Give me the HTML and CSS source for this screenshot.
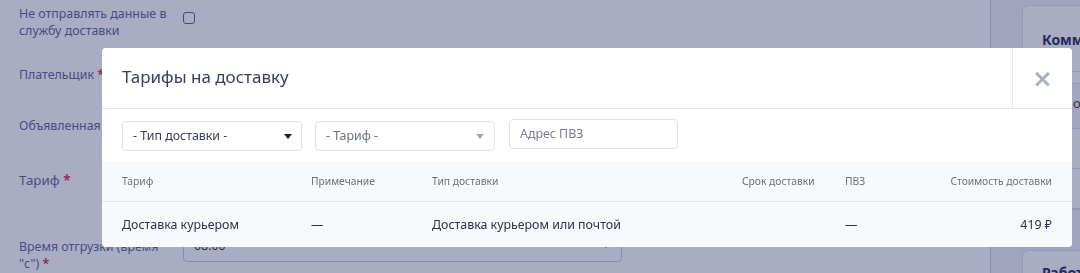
FILE: index.html
```html
<!DOCTYPE html>
<html lang="ru">
<head>
<meta charset="utf-8">
<title>Тарифы на доставку</title>
<link rel="stylesheet" href="styles.css">
</head>
<body>
<div class="page">
  <div class="form">
    <div class="row row-1">
      <div class="label">Не отправлять данные в<br>службу доставки</div>
      <div class="control"><span class="checkbox"></span></div>
    </div>
    <div class="row row-2">
      <div class="label">Плательщик <span class="req">*</span></div>
    </div>
    <div class="row row-3">
      <div class="label">Объявленная</div>
    </div>
    <div class="row row-4">
      <div class="label">Тариф <span class="req">*</span></div>
    </div>
    <div class="row row-5">
      <div class="label">Время отгрузки (время<br>"с") <span class="req">*</span></div>
      <div class="control"><div class="bg-select">08:00<span class="bg-caret"></span></div></div>
    </div>
  </div>
  <div class="side">
    <div class="card">
      <div class="card-title">Комментарии</div>
      <div class="card-line"></div>
      <div class="card-row shaded">о</div>
      <div class="card-row"></div>
      <div class="card-row"></div>
      <div class="card-row"></div>
    </div>
    <div class="card card-2">
      <div class="card-title">Работы</div>
    </div>
  </div>
</div>

<div class="overlay"></div>

<div class="modal">
  <div class="modal-head">
    <div class="modal-title">Тарифы на доставку</div>
    <div class="modal-close">×</div>
  </div>
  <div class="filters">
    <div class="select select-dark">- Тип доставки -<span class="caret"></span></div>
    <div class="select select-muted">- Тариф -<span class="caret caret-light"></span></div>
    <div class="input">Адрес ПВЗ</div>
  </div>
  <div class="table">
    <div class="tr th">
      <div>Тариф</div>
      <div>Примечание</div>
      <div>Тип доставки</div>
      <div>Срок доставки</div>
      <div>ПВЗ</div>
      <div class="right">Стоимость доставки</div>
    </div>
    <div class="tr td">
      <div>Доставка курьером</div>
      <div>—</div>
      <div>Доставка курьером или почтой</div>
      <div></div>
      <div>—</div>
      <div class="right">419 ₽</div>
    </div>
  </div>
</div>
</body>
</html>
```

FILE: styles.css
```css
* { box-sizing: border-box; }
html, body {
  margin: 0;
  padding: 0;
  width: 1080px;
  height: 273px;
  overflow: hidden;
  font-family: "Noto Sans", "Open Sans", sans-serif;
  background: #ffffff;
}

.page {
  display: flex;
  height: 273px;
  overflow: hidden;
}

.form {
  flex: none;
  width: 990px;
  padding-left: 19px;
  display: flex;
  flex-direction: column;
  color: #5d6290;
  font-size: 12.4px;
  line-height: 17px;
}
.row { display: flex; }
.label { width: 164px; }
.req { color: #e0305a; font-weight: 700; }
.row-1 { padding-top: 5px; }
.row-1 .control { padding-top: 7px; }
.checkbox {
  display: block;
  width: 12px;
  height: 12px;
  border: 1.5px solid #5a5f78;
  border-radius: 3px;
}
.row-2 { margin-top: 27px; }
.row-3 { margin-top: 34px; }
.row-4 { margin-top: 38px; font-size: 13.4px; }
.row-5 { margin-top: 49px; }
.row-5 .control { margin-top: -9px; }
.bg-select {
  width: 439px;
  height: 33px;
  border: 1px solid #c9cbd8;
  border-radius: 4px;
  padding: 7px 10px;
  color: #333;
  position: relative;
}
.bg-caret {
  position: absolute;
  right: 12px;
  top: 14px;
  border-left: 3px solid transparent;
  border-right: 3px solid transparent;
  border-top: 4px solid #333;
}

.side {
  flex: 1;
  border-left: 1px solid #c9cad8;
  background: #f1f2f7;
  padding: 5px 0 0 31px;
  display: flex;
  flex-direction: column;
  gap: 40px;
  min-width: 0;
  overflow: hidden;
}
.card {
  background: #ffffff;
  border: 1px solid #dcdeea;
  border-right: none;
  border-radius: 6px 0 0 6px;
  height: 205px;
  overflow: hidden;
  white-space: nowrap;
  flex: none;
}
.card-title {
  padding: 24px 0 0 19px;
  height: 65px;
  font-weight: 700;
  font-size: 14px;
  color: #232650;
}
.card-line { height: 12px; border-top: 1px solid #dcdeea; }
.card-row {
  height: 40px;
  border-top: 1px solid #dcdeea;
  padding: 10px 0 0 50px;
  color: #333;
  font-size: 13px;
}
.card-row.shaded { background: #f5f6f9; height: 45px; }
.card-2 { height: 60px; }
.card-2 .card-title { padding-top: 12px; }

.overlay {
  position: fixed;
  inset: 0;
  background: rgba(43, 48, 105, 0.4);
}

.modal {
  position: absolute;
  left: 102px;
  top: 48px;
  width: 970px;
  height: 199px;
  background: #ffffff;
  border-radius: 4px;
  overflow: hidden;
  color: #34375a;
}
.modal-head {
  display: flex;
  height: 61px;
  border-bottom: 1px solid #e4e6eb;
}
.modal-title {
  flex: 1;
  padding: 16px 20px 0;
  font-size: 17px;
  line-height: 26px;
  color: #3a3d5e;
}
.modal-close {
  width: 60px;
  border-left: 1px solid #e4e6eb;
  display: flex;
  align-items: center;
  justify-content: center;
  font-size: 25px;
  font-weight: 700;
  color: #aab1bb;
  font-family: "DejaVu Sans", sans-serif;
}

.filters {
  display: flex;
  align-items: flex-start;
  padding: 12px 20px 10px;
  height: 52px;
}
.select {
  position: relative;
  width: 180px;
  height: 30px;
  border: 1px solid #dfe1e8;
  border-radius: 4px;
  padding: 4px 10px;
  font-size: 12.4px;
  line-height: 20px;
}
.select-dark { color: #3a3d5e; }
.select-muted { margin-left: 13px; color: #6b6f85; }
.caret {
  position: absolute;
  right: 9px;
  top: 12px;
  border-left: 4px solid transparent;
  border-right: 4px solid transparent;
  border-top: 5px solid #222;
}
.caret-light { border-top-color: #a4a8b4; right: 10px; }
.input {
  margin-left: 14px;
  margin-top: -2px;
  width: 169px;
  height: 30px;
  border: 1px solid #dfe1e8;
  border-radius: 4px;
  padding: 4px 10px;
  font-size: 12.4px;
  line-height: 20px;
  color: #7a7e92;
}

.table { background: #f8f9fb; }
.tr {
  display: grid;
  grid-template-columns: 189px 121px 310px 103px 1fr auto;
  padding: 0 20px;
  align-items: center;
}
.th {
  height: 41px;
  border-bottom: 1px solid #e3e5ea;
  font-size: 10.3px;
  color: #6b6f82;
}
.td {
  height: 45px;
  font-size: 12.4px;
  color: #2e3150;
}
.right { text-align: right; }
```
